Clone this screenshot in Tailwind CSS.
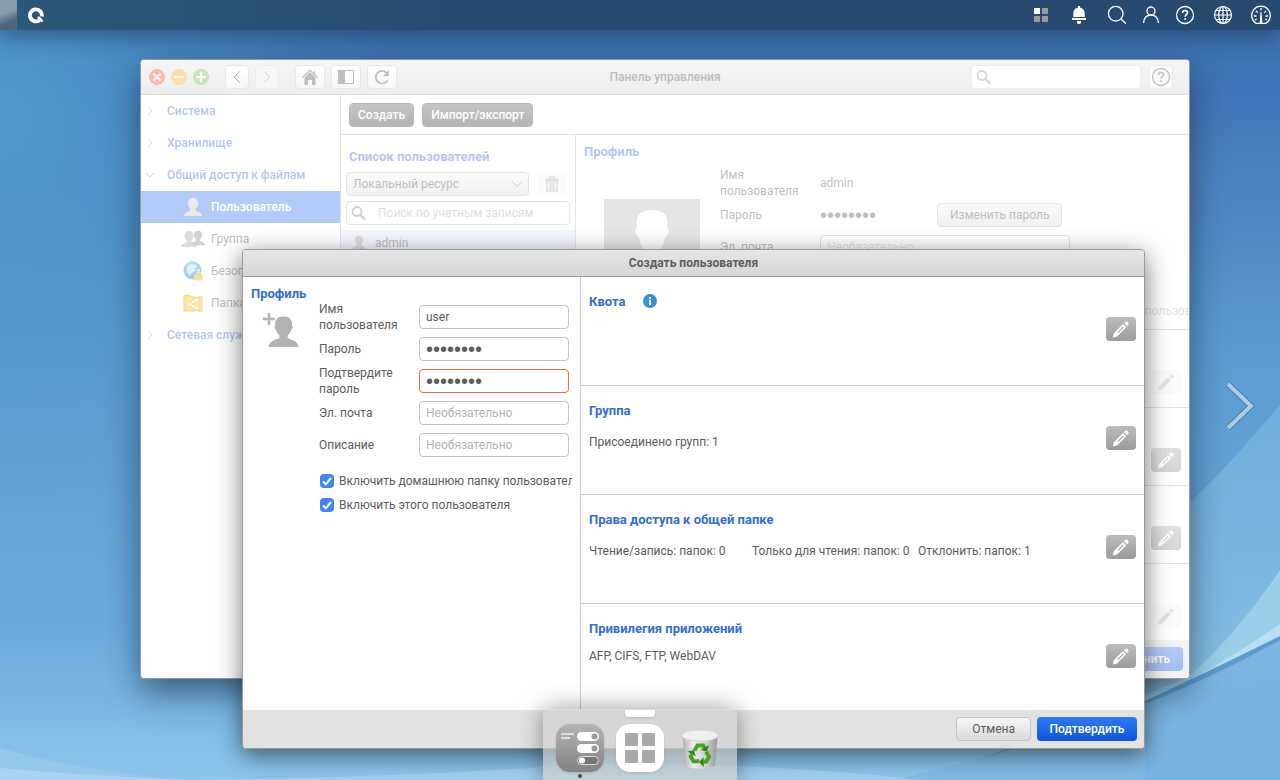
<!DOCTYPE html>
<html lang="ru">

<head>
    <meta charset="UTF-8">
    <meta name="viewport" content="width=device-width, initial-scale=1.0">
    <title>Панель управления - Создать пользователя</title>
    <script src="https://cdn.jsdelivr.net/npm/@tailwindcss/browser@4"></script>
</head>

<body class="relative h-screen overflow-hidden bg-[#5596d0] font-['Roboto',sans-serif] text-xs leading-4 text-[#5c5c5c]">
    <!-- shared icons -->
    <svg class="hidden">
        <symbol id="pencil" viewBox="0 0 18 18">
            <path fill="currentColor" d="M.8 17.400 1.800 13.200 11 4l3.200 3.200L5 16.400zM12 3l.9-.9a2.300 2.300 0 0 1 3.200 3.200l-.9.9z" />
            <path d="m5.800 12.600 5.600-5.600" stroke="#a8a8a8" stroke-width="1.200" fill="none" />
        </symbol>
        <symbol id="person" viewBox="0 0 20 20">
            <path fill="currentColor" d="M10 1c3.300 0 5 2 4.900 5 .8.500.600 2-.400 2.500-.400 1.600-1.100 2.600-2 3.300v1.700c1.700 1.100 6 1.500 6.500 5.500H1c.500-4 4.800-4.400 6.500-5.500v-1.700c-.9-.7-1.600-1.700-2-3.300-1-.5-1.200-2-.4-2.500C5 3 6.700 1 10 1z" />
        </symbol>
        <symbol id="lens" viewBox="0 0 16 16">
            <circle cx="6" cy="6.500" r="4.500" fill="none" stroke="currentColor" stroke-width="1.800" />
            <path d="m9.500 10 4 4" stroke="currentColor" stroke-width="2.300" stroke-linecap="round" />
        </symbol>
        <symbol id="chevron" viewBox="0 0 10 10">
            <path d="m3 1 4 4-4 4" fill="none" stroke="currentColor" vector-effect="non-scaling-stroke" />
        </symbol>
        <symbol id="help" viewBox="0 0 20 20">
            <circle cx="10" cy="10" r="8.500" fill="none" stroke="currentColor" stroke-width="1.300" />
            <path d="M7.500 8c0-1.700 1-2.600 2.500-2.600s2.500.9 2.500 2.300c0 1.800-2.400 2-2.400 4.100" fill="none" stroke="currentColor" stroke-width="1.500" />
            <circle cx="10.100" cy="14" r="1" fill="currentColor" />
        </symbol>
    </svg>

    <!-- wallpaper -->
    <svg class="absolute inset-0 h-full w-full" viewBox="0 0 1280 780" preserveAspectRatio="none" aria-hidden="true">
        <defs>
            <linearGradient id="sky" x2="0" y2="1">
                <stop offset="0" stop-color="#3c6fae" />
                <stop offset=".12" stop-color="#4076b8" />
                <stop offset=".45" stop-color="#5c9bd1" />
                <stop offset=".8" stop-color="#6aaadd" />
                <stop offset="1" stop-color="#8cc5ea" />
            </linearGradient>
            <radialGradient id="glowLeft" gradientUnits="userSpaceOnUse" cx="0" cy="110" r="400">
                <stop offset="0" stop-color="#4f99ce" />
                <stop offset="1" stop-color="#4f99ce" stop-opacity="0" />
            </radialGradient>
            <linearGradient id="hill" x1="0" y1="0" x2="0" y2="1">
                <stop offset="0" stop-color="#6fafdb" />
                <stop offset=".6" stop-color="#80bbe1" />
                <stop offset="1" stop-color="#9fd0ea" />
            </linearGradient>
            <linearGradient id="floor" x1="0" y1="0" x2="1" y2="1">
                <stop offset="0" stop-color="#80badf" />
                <stop offset="1" stop-color="#78b3e3" />
            </linearGradient>
        </defs>
        <path fill="url(#sky)" d="M0 0h1280v780H0z" />
        <path fill="url(#glowLeft)" d="M0 0h500v520H0z" />
        <path fill="url(#hill)" d="M1280 405q-45 54-90 98-40 38-90 70v207h180z" />
        <path fill="#a6d5eb" opacity=".7" d="M1280 570q-40 60-90 106-40 18-90 36l30 4q90-35 150-76z" />
        <path fill="#bfe2f0" opacity=".8" d="M1280 624q-20 14-52 34l-30 18q50-16 82-36z" />
        <path fill="#5d9bcd" d="M1280 636q-60 30-135 65-90 34-220 75h120q130-50 235-130z" />
        <path fill="url(#floor)" d="M1280 640q-64 36-135 64-90 38-250 76h385z" />
        <path fill="#9acbea" opacity=".7" d="M0 748q90 26 190 32H0z" />
        <path fill="#b0d5ef" opacity=".8" d="M0 768q90 8 190 12H0z" />
        <path fill="#a7d1ee" opacity=".8" d="M190 780q190-2 353-13 200-8 380 13z" />
        <path fill="#8fc3e9" opacity=".4" d="M930 772q110-30 215-68v76H900z" />
    </svg>

    <!-- top bar -->
    <header class="relative flex h-[30px] items-center justify-between bg-linear-to-r from-[#2d5877] to-[#264a70] to-40% pr-[9px] text-white shadow-[0_8px_20px_rgba(20,40,70,0.45)]">
        <div class="flex h-full items-center gap-[10px]">
            <span class="h-full w-[17px] bg-linear-160 from-[#8a9cab] from-40% to-[#50677b] to-70%"></span>
            <button aria-label="Меню">
                <svg class="size-[18px]" viewBox="0 0 18 18"><path d="M12.500 14.200A6 6 0 1 1 14.800 10.500" fill="none" stroke="currentColor" stroke-width="3.800" /><path d="m11 11 4.500 4.500" stroke="currentColor" stroke-width="2.500" /></svg>
            </button>
        </div>
        <nav class="flex items-center gap-[18px]">
            <button aria-label="Приложения">
                <svg class="size-5" viewBox="0 0 20 20"><path fill="#fff" d="M3 3h6v6H3z" /><path fill="#999" d="M11 3h6v6h-6zM3 11h6v6H3zM11 11h6v6h-6z" /></svg>
            </button>
            <button aria-label="Уведомления">
                <svg class="size-5" viewBox="0 0 20 20"><path fill="currentColor" d="M9 1h2v1.500c3 .500 4.700 2.500 4.700 6V12H4.300V8.500c0-3.500 1.700-5.500 4.700-6zM3 13h14v2H3zM8 16h4v2l-1 1H9l-1-1z" /></svg>
            </button>
            <div class="flex items-center gap-[14px]">
                <button aria-label="Поиск">
                    <svg class="size-5" viewBox="0 0 20 20" fill="none" stroke="currentColor" stroke-width="1.300"><circle cx="8.700" cy="8.700" r="7.300" /><path d="m14 14 5 4.800" /></svg>
                </button>
                <button aria-label="Пользователь">
                    <svg class="size-5" viewBox="0 0 20 20" fill="none" stroke="currentColor" stroke-width="1.300"><circle cx="10" cy="6" r="4" /><path d="M2.500 18c.500-5 3.500-8 7.500-8s7 3 7.500 8" /></svg>
                </button>
                <button aria-label="Справка"><svg class="size-5"><use href="#help" /></svg></button>
            </div>
            <button aria-label="Язык">
                <svg class="size-5" viewBox="0 0 20 20" fill="none" stroke="currentColor" stroke-width="1.200"><circle cx="10" cy="10" r="8.500" /><ellipse cx="10" cy="10" rx="4.300" ry="8.500" /><path d="M10 1.500v17M1.500 10h17M3 5.500h14M3 14.500h14" /></svg>
            </button>
            <button aria-label="Панель мониторинга">
                <svg class="size-5" viewBox="0 0 20 20" fill="none" stroke="currentColor" stroke-width="1.300"><path d="M5 18.300a9.300 9.300 0 1 1 10 0z" /><path d="M10 3v2.500M3 11h2.500M14.500 11H17M5 6l1.700 1.600M15 6l-1.700 1.600M4 15l1.800-1M16 15l-1.800-1" /><path fill="currentColor" stroke="none" d="M9.500 7h1l.8 11H8.700z" /></svg>
            </button>
        </nav>
    </header>

    <!-- control panel window -->
    <section class="absolute top-[59px] left-[140px] flex h-[620px] w-[1050px] flex-col overflow-hidden rounded border border-[#999] bg-white shadow-[0_14px_34px_rgba(20,35,60,0.6)]">
        <div class="flex h-[35px] shrink-0 items-center border-b border-[#a8a8a8] bg-linear-to-b from-[#e6e6e6] to-[#d4d4d4] px-2">
            <div class="flex flex-1 items-center gap-4">
                <div class="flex gap-[6px]">
                    <button aria-label="Закрыть"><svg class="size-4" viewBox="0 0 16 16"><circle cx="8" cy="8" r="7.500" fill="#ff4e35" stroke="#e84a35" /><path d="m4.500 4.500 7 7m0-7-7 7" stroke="#fff" stroke-width="2" /></svg></button>
                    <button aria-label="Свернуть"><svg class="size-4" viewBox="0 0 16 16"><circle cx="8" cy="8" r="7.500" fill="#ffb120" stroke="#f0a628" /><path d="M3 8h10" stroke="#fff" stroke-width="2" /></svg></button>
                    <button aria-label="Развернуть"><svg class="size-4" viewBox="0 0 16 16"><circle cx="8" cy="8" r="7.500" fill="#7cc855" stroke="#6cb848" /><path d="M3 8h10M8 3v10" stroke="#fff" stroke-width="2" /></svg></button>
                </div>
                <div class="flex gap-[6px]">
                    <button aria-label="Назад" class="grid size-6 place-items-center rounded border border-[#c4c4c4] bg-linear-to-b from-white to-[#ececec]"><svg class="size-[14px] rotate-180 text-[#222]"><use href="#chevron" /></svg></button>
                    <button aria-label="Вперёд" class="grid size-6 place-items-center rounded border border-[#d0d0d0] bg-[#e8e8e8]"><svg class="size-[14px] text-[#888]"><use href="#chevron" /></svg></button>
                </div>
                <div class="flex gap-[6px]">
                    <button aria-label="Домой" class="grid h-6 w-[30px] place-items-center rounded border border-[#c4c4c4] bg-linear-to-b from-white to-[#ececec]">
                        <svg class="size-4" viewBox="0 0 16 16" fill="#606060"><path fill="none" stroke="#606060" stroke-width="1.200" d="M.500 8.500 8 1l7.500 7.500M12.500 2v3" /><path d="M2.500 8.500 8 3l5.500 5.500V16H10v-5H6v5H2.500z" /></svg>
                    </button>
                    <button aria-label="Боковая панель" class="grid h-6 w-[30px] place-items-center rounded border border-[#c4c4c4] bg-linear-to-b from-white to-[#ececec]">
                        <svg class="size-4" viewBox="0 0 16 16"><path fill="#fff" stroke="#606060" d="M.500 1.500h15v13H.500z" /><path fill="#606060" d="M0 1h7v14H0z" /></svg>
                    </button>
                    <button aria-label="Обновить" class="grid h-6 w-[30px] place-items-center rounded border border-[#c4c4c4] bg-linear-to-b from-white to-[#ececec]">
                        <svg class="size-4" viewBox="0 0 16 16"><path d="M13.500 11.500A6.300 6.300 0 1 1 12.800 4" fill="none" stroke="#666" stroke-width="1.800" /><path fill="#666" d="M15 1v6H9z" /></svg>
                    </button>
                </div>
            </div>
            <h1 class="font-medium text-[#555]">Панель управления</h1>
            <div class="flex flex-1 items-center justify-end gap-2">
                <label class="flex h-6 w-[170px] items-center rounded border border-[#d0d0d0] bg-white px-1 text-[#999]">
                    <svg class="size-4 shrink-0"><use href="#lens" /></svg>
                    <input type="search" aria-label="Поиск" class="w-full min-w-0 outline-none">
                </label>
                <button aria-label="Справка" class="mr-2 grid size-6 place-items-center rounded border border-[#d0d0d0] bg-[#f4f4f4] text-[#666]"><svg class="size-5"><use href="#help" /></svg></button>
            </div>
        </div>

        <div class="flex min-h-0 flex-1">
            <nav class="w-[200px] shrink-0 border-r border-[#bbb] font-medium text-[#3f74d7]">
                <a href="#" class="flex h-8 items-center gap-3 px-1"><svg class="size-[10px] text-[#6fa3dd]"><use href="#chevron" /></svg>Система</a>
                <a href="#" class="flex h-8 items-center gap-3 px-1"><svg class="size-[10px] text-[#6fa3dd]"><use href="#chevron" /></svg>Хранилище</a>
                <a href="#" class="flex h-8 items-center gap-3 px-1"><svg class="size-[10px] rotate-90 text-[#6fa3dd]"><use href="#chevron" /></svg>Общий доступ к файлам</a>
                <a href="#" class="flex h-8 items-center gap-2 bg-[#3f80f3] pl-[42px] text-white"><svg class="size-5 text-[#ccc]"><use href="#person" /></svg>Пользователь</a>
                <a href="#" class="flex h-8 items-center gap-2 pl-[42px] font-normal text-[#5c5c5c]">
                    <span class="flex w-5 justify-center text-[#aaa]"><svg class="-mr-2 size-[18px] shrink-0"><use href="#person" /></svg><svg class="size-4 shrink-0 text-[#8c8c8c]"><use href="#person" /></svg></span>Группа
                </a>
                <a href="#" class="flex h-8 items-center gap-2 pl-[42px] font-normal text-[#5c5c5c]">
                    <svg class="size-5" viewBox="0 0 20 20"><circle cx="9.500" cy="9.500" r="9" fill="#1c86d8" /><circle cx="8.500" cy="6.500" r="6" fill="#3fb0f0" /><path fill="#d5efff" d="m4 6 4-3 5 1 1 2-3 1 1 3-3 1-2 4-3-4zM14 9l3-1v4l-3 1z" opacity=".8" /><path fill="#e6aa10" d="M11 13h8.500v6.500H11z" /><path d="M13 13v-1.500q2.200-2.500 4.500 0V13" fill="none" stroke="#c89a2a" /></svg>Безопасность
                </a>
                <a href="#" class="flex h-8 items-center gap-2 pl-[42px] font-normal text-[#5c5c5c]">
                    <svg class="size-5" viewBox="0 0 20 20"><path fill="#fbbd0a" stroke="#d89a10" d="M1 2.500h6l2 1.500h10v14H1z" /><path d="m13 7-6.500 4 6.500 4" fill="none" stroke="#fff" stroke-width="1.300" /><circle cx="13.500" cy="7" r="1.800" fill="#fff" /><circle cx="6.500" cy="11" r="1.800" fill="#fff" /><circle cx="13.500" cy="15" r="1.800" fill="#fff" /></svg>Папка общего доступа
                </a>
                <a href="#" class="flex h-8 items-center gap-3 px-1"><svg class="size-[10px] text-[#6fa3dd]"><use href="#chevron" /></svg>Сетевая служба</a>
            </nav>

            <div class="flex min-w-0 flex-1 flex-col">
                <div class="flex h-10 shrink-0 items-center gap-2 border-b border-[#bbb] px-2 font-medium text-white">
                    <button class="h-6 rounded border border-[#555] bg-linear-to-b from-[#6e6e6e] to-[#454545] px-2">Создать</button>
                    <button class="h-6 rounded border border-[#555] bg-linear-to-b from-[#6e6e6e] to-[#454545] px-2">Импорт/экспорт</button>
                </div>
                <div class="flex min-h-0 flex-1">
                    <div class="w-[235px] shrink-0 border-r border-[#bbb] pt-[14px]">
                        <h2 class="px-2 text-[13px] leading-4 font-bold text-[#3f74d7]">Список пользователей</h2>
                        <div class="mt-[7px] flex gap-2 px-[5px]">
                            <div class="relative">
                                <select aria-label="Источник" class="h-6 w-[183px] appearance-none rounded border border-[#bbb] bg-linear-to-b from-[#f4f4f4] to-[#dcdcdc] px-[6px]">
                                    <option>Локальный ресурс</option>
                                </select>
                                <svg class="pointer-events-none absolute top-[6px] right-[6px] size-3 rotate-90 text-[#3f80f3]"><use href="#chevron" /></svg>
                            </div>
                            <button aria-label="Удалить" class="grid h-6 w-[30px] place-items-center rounded bg-[#f4f4f4]">
                                <svg class="size-4" viewBox="0 0 16 16" fill="none" stroke="#aaa" stroke-width="1.300"><path d="M1.500 3.500h13M5.500 3V1h5v2M3 5v10h10V5zM6 6v8M8 6v8M10 6v8" /></svg>
                            </button>
                        </div>
                        <label class="mx-[5px] mt-[5px] flex h-6 items-center gap-[11px] rounded border border-[#bbb] px-1">
                            <svg class="size-4 shrink-0 text-[#888]"><use href="#lens" /></svg>
                            <input type="search" aria-label="Поиск" placeholder="Поиск по учетным записям" class="w-full min-w-0 outline-none placeholder:text-[#aaa]">
                        </label>
                        <a href="#" class="mt-[5px] flex h-[26px] items-center gap-2 bg-[#e6eaff] px-[10px]"><svg class="size-4 text-[#aaa]"><use href="#person" /></svg>admin</a>
                    </div>

                    <div class="flex min-w-0 flex-1 flex-col">
                        <div class="h-[195px] shrink-0 overflow-hidden border-b border-[#bbb] px-2 pt-[9px]">
                            <h2 class="text-[13px] leading-4 font-bold text-[#3f74d7]">Профиль</h2>
                            <div class="mt-[7px] flex">
                                <svg class="mt-8 mr-5 ml-5 size-24" viewBox="0 0 96 96"><path fill="#bdbdbf" d="M0 0h96v96H0z" /><path fill="#fff" d="M48 11c14 0 17 8 15 17l1 2c2 2 0 7-3 9-1 7-5 13-8 16 0 12 25 10 30 29v12H13V84c5-19 30-17 30-29-3-3-7-9-8-16-3-2-5-7-3-9l1-2c-2-9 1-17 15-17z" /></svg>
                                <div class="min-w-0 flex-1">
                                    <div class="flex h-8 items-center"><span class="w-25 shrink-0">Имя<br>пользователя</span>admin</div>
                                    <div class="flex h-8 items-center"><span class="w-25 shrink-0">Пароль</span><span class="w-[117px] font-['Liberation_Sans',sans-serif] text-[20px] leading-4">••••••••</span><button class="h-6 rounded border border-[#bbb] bg-linear-to-b from-[#f4f4f4] to-[#d8d8d8] px-3">Изменить пароль</button></div>
                                    <div class="flex h-8 items-center"><label for="mail" class="w-25 shrink-0">Эл. почта</label><input id="mail" type="email" placeholder="Необязательно" class="h-6 w-[250px] rounded border border-[#bbb] px-[6px] placeholder:text-[#bbb]"></div>
                                    <div class="flex h-8 items-center"><label for="about" class="w-25 shrink-0">Описание</label><input id="about" placeholder="Необязательно" class="h-6 w-[250px] rounded border border-[#bbb] px-[6px] placeholder:text-[#bbb]"></div>
                                    <label class="flex h-8 items-center gap-1 pl-[244px] whitespace-nowrap text-[#b8b8b8]"><input type="checkbox" disabled class="size-[14px]">Включить домашнюю папку пользователя</label>
                                </div>
                            </div>
                        </div>
                        <div class="flex h-[78px] shrink-0 items-center justify-end border-b border-[#bbb] px-2 pt-[26px]"><button aria-label="Изменить квоту" disabled class="grid h-6 w-[30px] place-items-center rounded bg-[#f6f6f6] text-[#c0c0c0]"><svg class="size-[18px]"><use href="#pencil" /></svg></button></div>
                        <div class="flex h-[78px] shrink-0 items-center justify-end border-b border-[#bbb] px-2 pt-[26px]"><button aria-label="Изменить группу" class="grid h-6 w-[30px] place-items-center rounded bg-linear-to-b from-[#b4b4b4] to-[#999] text-white"><svg class="size-[18px]"><use href="#pencil" /></svg></button></div>
                        <div class="flex h-[78px] shrink-0 items-center justify-end border-b border-[#bbb] px-2 pt-[26px]"><button aria-label="Изменить права" class="grid h-6 w-[30px] place-items-center rounded bg-linear-to-b from-[#b4b4b4] to-[#999] text-white"><svg class="size-[18px]"><use href="#pencil" /></svg></button></div>
                        <div class="flex h-[76px] shrink-0 items-center justify-end px-2 pt-7"><button aria-label="Изменить привилегии" disabled class="grid h-6 w-[30px] place-items-center rounded bg-[#f6f6f6] text-[#c0c0c0]"><svg class="size-[18px]"><use href="#pencil" /></svg></button></div>
                        <div class="flex flex-1 items-center justify-end bg-[#e2e2e2] px-[6px]"><button class="h-6 rounded bg-linear-to-b from-[#3f80f3] to-[#1a5be0] px-[13px] font-medium text-white">Применить</button></div>
                    </div>
                </div>
            </div>
        </div>
        <!-- mask while the dialog is open -->
        <div class="absolute inset-0 bg-white/60"></div>
    </section>

    <!-- create user dialog -->
    <form class="absolute top-[249px] left-[242px] flex h-[500px] w-[903px] flex-col overflow-hidden rounded border border-[#999] bg-white shadow-[0_6px_24px_rgba(0,0,0,0.55)]">
        <h2 class="flex h-[27px] shrink-0 items-center justify-center border-b border-[#999] bg-linear-to-b from-[#e6e6e6] to-[#d6d6d6] font-bold">Создать пользователя</h2>
        <div class="flex min-h-0 flex-1">
            <div class="w-[338px] shrink-0 border-r border-[#ccc] p-2">
                <h3 class="h-4 text-[13px] leading-[18px] font-bold text-[#366dd0]">Профиль</h3>
                <div class="flex">
                    <div class="w-[68px] shrink-0">
                        <svg class="mt-3 ml-3 h-9 w-[37px] text-[#b2b2b2]" viewBox="0 0 37 36"><path d="M6 0v12M0 6h12" stroke="currentColor" stroke-width="2.500" /><path fill="currentColor" d="M20.500 3.500c6 0 9 3 8.500 9 1.300.800.800 3.300-.700 4.200-.700 2.800-2 4.300-3.600 5.600v2.700c3 1.900 10 2.600 11 9H5.500c.800-6.400 8-7.100 11-9v-2.700c-1.600-1.300-2.900-2.800-3.600-5.600-1.500-.900-2-3.400-.700-4.200-.500-6 2.300-9 8.300-9z" /></svg>
                    </div>
                    <div class="min-w-0 flex-1">
                        <div class="flex h-8 items-center"><label for="new-name" class="w-25 shrink-0">Имя<br>пользователя</label><input id="new-name" value="user" class="h-6 w-[150px] rounded border border-[#c4c4c4] px-[6px]"></div>
                        <div class="flex h-8 items-center"><label for="new-pass" class="w-25 shrink-0">Пароль</label><input id="new-pass" type="password" value="password" class="h-6 w-[150px] rounded border border-[#c4c4c4] px-[6px] font-['Liberation_Sans',sans-serif] text-[20px]"></div>
                        <div class="flex h-8 items-center"><label for="new-pass2" class="w-25 shrink-0">Подтвердите<br>пароль</label><input id="new-pass2" type="password" value="password" class="h-6 w-[150px] rounded border border-[#f9683c] px-[6px] font-['Liberation_Sans',sans-serif] text-[20px]"></div>
                        <div class="flex h-8 items-center"><label for="new-mail" class="w-25 shrink-0">Эл. почта</label><input id="new-mail" type="email" placeholder="Необязательно" class="h-6 w-[150px] rounded border border-[#c4c4c4] px-[6px] placeholder:text-[#b4b4b4]"></div>
                        <div class="flex h-8 items-center"><label for="new-about" class="w-25 shrink-0">Описание</label><input id="new-about" placeholder="Необязательно" class="h-6 w-[150px] rounded border border-[#c4c4c4] px-[6px] placeholder:text-[#b4b4b4]"></div>
                        <div class="mt-2 overflow-hidden whitespace-nowrap">
                            <label class="flex h-6 items-center gap-[5px] pl-px"><span class="relative size-[14px] shrink-0"><input type="checkbox" checked class="block size-[14px] appearance-none rounded bg-[#4285f4]"><svg class="pointer-events-none absolute inset-0 size-[14px]" viewBox="0 0 14 14"><path d="m3 7.500 2.800 2.800L11 4" fill="none" stroke="#fff" stroke-width="2" /></svg></span>Включить домашнюю папку пользователя</label>
                            <label class="flex h-6 items-center gap-[5px] pl-px"><span class="relative size-[14px] shrink-0"><input type="checkbox" checked class="block size-[14px] appearance-none rounded bg-[#4285f4]"><svg class="pointer-events-none absolute inset-0 size-[14px]" viewBox="0 0 14 14"><path d="m3 7.500 2.800 2.800L11 4" fill="none" stroke="#fff" stroke-width="2" /></svg></span>Включить этого пользователя</label>
                        </div>
                    </div>
                </div>
            </div>

            <div class="min-w-0 flex-1">
                <div class="flex h-[109px] items-center justify-between border-b border-[#ccc] px-2">
                    <div class="h-full pt-4">
                        <h3 class="flex h-4 gap-[18px] text-[13px] leading-[18px] font-bold text-[#366dd0]">Квота
                            <svg class="mt-px size-[14px]" viewBox="0 0 14 14"><circle cx="7" cy="7" r="7" fill="#3d8fd4" /><path fill="#fff" d="M6 5.700h2V11H6zM6 3h2v1.700H6z" /></svg>
                        </h3>
                    </div>
                    <button type="button" aria-label="Изменить квоту" class="mb-1 grid h-6 w-[30px] place-items-center rounded bg-linear-to-b from-[#bcbcbc] to-[#9c9c9c] text-white"><svg class="size-[18px]"><use href="#pencil" /></svg></button>
                </div>
                <div class="flex h-[109px] items-center justify-between border-b border-[#ccc] px-2">
                    <div class="h-full pt-4">
                        <h3 class="h-4 text-[13px] leading-[18px] font-bold text-[#366dd0]">Группа</h3>
                        <p class="mt-4">Присоединено групп: 1</p>
                    </div>
                    <button type="button" aria-label="Изменить группу" class="mb-1 grid h-6 w-[30px] place-items-center rounded bg-linear-to-b from-[#bcbcbc] to-[#9c9c9c] text-white"><svg class="size-[18px]"><use href="#pencil" /></svg></button>
                </div>
                <div class="flex h-[109px] items-center justify-between border-b border-[#ccc] px-2">
                    <div class="h-full pt-4">
                        <h3 class="h-4 text-[13px] leading-[18px] font-bold text-[#366dd0]">Права доступа к общей папке</h3>
                        <p class="mt-4 grid grid-cols-[155px_158px_auto] gap-2 whitespace-nowrap"><span>Чтение/запись: папок: 0</span><span>Только для чтения: папок: 0</span><span>Отклонить: папок: 1</span></p>
                    </div>
                    <button type="button" aria-label="Изменить права" class="mb-1 grid h-6 w-[30px] place-items-center rounded bg-linear-to-b from-[#bcbcbc] to-[#9c9c9c] text-white"><svg class="size-[18px]"><use href="#pencil" /></svg></button>
                </div>
                <div class="flex h-[107px] items-center justify-between px-2">
                    <div class="h-full pt-4">
                        <h3 class="h-4 text-[13px] leading-[18px] font-bold text-[#366dd0]">Привилегия приложений</h3>
                        <p class="mt-3">AFP, CIFS, FTP, WebDAV</p>
                    </div>
                    <button type="button" aria-label="Изменить привилегии" class="mb-1 grid h-6 w-[30px] place-items-center rounded bg-linear-to-b from-[#bcbcbc] to-[#9c9c9c] text-white"><svg class="size-[18px]"><use href="#pencil" /></svg></button>
                </div>
            </div>
        </div>
        <div class="flex h-[38px] shrink-0 items-center justify-end gap-[6px] bg-[#e2e2e2] px-[7px]">
            <button type="button" class="h-6 rounded border border-[#c4c4c4] bg-linear-to-b from-[#f8f8f8] to-[#dadada] px-[15px]">Отмена</button>
            <button type="submit" class="h-6 w-[100px] rounded bg-linear-to-b from-[#2f7bf2] to-[#0d55dc] font-medium text-white">Подтвердить</button>
        </div>
    </form>

    <!-- next desktop -->
    <button aria-label="Следующий рабочий стол" class="absolute top-[380px] right-[25px]">
        <svg class="h-[52px] w-[30px]" viewBox="0 0 30 52" fill="none"><path d="m3 4 23 22L3 48" stroke="#3c6f9c" stroke-width="6" opacity=".7" /><path d="m3 4 23 22L3 48" stroke="#aecde6" stroke-width="4" /></svg>
    </button>

    <!-- dock -->
    <footer class="absolute bottom-0 left-1/2 h-[71px] w-[194px] -translate-x-1/2 rounded-t bg-[#d0d0d0]/68 px-[13px] pt-[15px] shadow-[0_0_24px_rgba(0,0,0,0.4)]">
        <span class="absolute top-px left-[82px] h-[7px] w-[30px] rounded-b bg-white shadow"></span>
        <div class="flex gap-3">
            <button aria-label="Панель управления" class="rounded-[14px] shadow">
                <svg class="size-12" viewBox="0 0 48 48">
                    <defs><linearGradient id="panel" x2="0" y2="1"><stop stop-color="#b4b4b4" /><stop offset="1" stop-color="#828282" /></linearGradient></defs>
                    <rect width="48" height="48" rx="14" fill="url(#panel)" />
                    <path d="M5 10h13M5 14h9" stroke="#ddd" stroke-width="2" />
                    <rect x="21" y="8" width="22" height="9" rx="4.500" fill="#fff" /><circle cx="38.500" cy="12.500" r="3" fill="#999" />
                    <rect x="21" y="20" width="22" height="9" rx="4.500" fill="#fff" /><circle cx="38.500" cy="24.500" r="3" fill="#999" />
                    <rect x="21.500" y="32.500" width="21" height="8" rx="4" fill="#777" stroke="#ddd" /><circle cx="26" cy="36.500" r="3" fill="#fff" />
                </svg>
            </button>
            <button aria-label="Приложения" class="rounded-[14px] shadow">
                <svg class="size-12" viewBox="0 0 48 48"><rect width="48" height="48" rx="14" fill="#fff" /><g fill="#a9a9a9"><rect x="9" y="9" width="13" height="13" rx="1" /><rect x="26" y="9" width="13" height="13" rx="1" /><rect x="9" y="26" width="13" height="13" rx="1" /><rect x="26" y="26" width="13" height="13" rx="1" /></g></svg>
            </button>
            <button aria-label="Корзина">
                <svg class="size-12" viewBox="0 0 48 48">
                    <defs><linearGradient id="bin"><stop stop-color="#aaa" /><stop offset=".3" stop-color="#f0f0f0" /><stop offset=".7" stop-color="#ccc" /><stop offset="1" stop-color="#8f8f8f" /></linearGradient></defs>
                    <path fill="url(#bin)" d="m6.500 12 2.500 30q15 6 30 0l2.500-30z" opacity=".9" />
                    <ellipse cx="24" cy="11.500" rx="18" ry="5.500" fill="#f0f0f0" stroke="#d8d8d8" />
                    <g id="arrow"><path d="m18.500 26.500 3-5h5.500l1.500 2.500" fill="none" stroke="#46a518" stroke-width="4" /><path fill="#318a10" d="m33 21-2 6.500-6.500-1.500z" /></g>
                    <use href="#arrow" transform="rotate(120 24 30.500)" />
                    <use href="#arrow" transform="rotate(240 24 30.500)" />
                </svg>
            </button>
        </div>
        <span class="absolute bottom-[2px] left-[35px] size-1 rounded-full bg-[#444]"></span>
    </footer>
</body>

</html>
